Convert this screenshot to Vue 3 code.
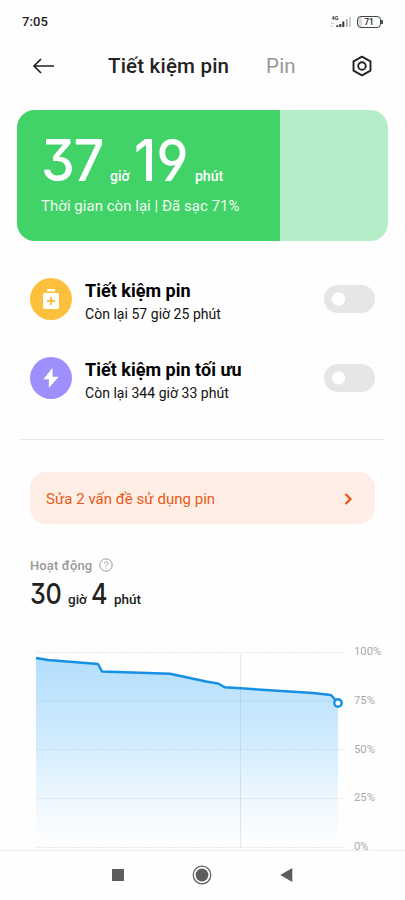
<script setup>
const modes = [
  { id: 'saver', title: 'Tiết kiệm pin', note: 'Còn lại 57 giờ 25 phút' },
  { id: 'ultra', title: 'Tiết kiệm pin tối ưu', note: 'Còn lại 344 giờ 33 phút' },
]
const levels = ['100%', '75%', '50%', '25%', '0%']
const gridLines = [12.5, 61, 109.5, 158.5, 207.5]
const curve = 'M36 18 L48 20 L98 24 L102 31.5 L170 33.8 L206 41.5 L218 43.5 L225 47.3 L313 53 L331 55 L338 63'
</script>

<template>
  <main class="screen">
    <div class="status">
      <span class="clock">7:05</span>
      <svg class="signal" width="22" height="14" viewBox="0 0 22 14">
        <text x="1.5" y="5" class="net">4G</text>
        <path d="M1 8.5h3M0 11h3" stroke="#ccc" stroke-width="1" />
        <path d="M7.3 12v-1.8M10.3 12V9M13.3 12V6.5" stroke="#333" stroke-width="2" />
        <path d="M16.8 12V4" stroke="#aaa" stroke-width="1.8" />
        <path d="M20 12V1.5" stroke="#ccc" stroke-width="1.8" />
      </svg>
      <span class="battery">71</span>
    </div>

    <header class="bar">
      <svg class="back" width="24" height="18" viewBox="0 0 24 18" fill="none" stroke="#222" stroke-width="1.7">
        <path d="M9 2 2 9l7 7M2 9h20" />
      </svg>
      <h1 class="tab active">Tiết kiệm pin</h1>
      <span class="tab">Pin</span>
      <svg class="gear" width="22" height="22" viewBox="0 0 22 22" fill="none" stroke="#222" stroke-width="1.9" stroke-linejoin="round">
        <path d="M11 1.7 19.5 6.3v9.4L11 20.3 2.5 15.7V6.3Z" />
        <circle cx="11" cy="11" r="3.8" />
      </svg>
    </header>

    <section class="charge">
      <div class="fill">
        <div class="time">
          <span class="num n1">37</span><span class="unit u1">giờ</span><span class="num n2">19</span><span class="unit">phút</span>
        </div>
        <p class="caption">Thời gian còn lại | Đã sạc 71%</p>
      </div>
    </section>

    <section class="modes">
      <div v-for="m in modes" :key="m.id" class="mode">
        <span class="disc" :class="m.id">
          <svg v-if="m.id === 'saver'" width="18" height="20" viewBox="0 0 18 20">
            <path d="M5 0h8v2.4H5Z" fill="#fff" />
            <rect x="1" y="4" width="16" height="16" rx="1.8" fill="#fff" />
            <path d="M9 8v8M5 12h8" stroke="#fbbd3b" stroke-width="1.8" />
          </svg>
          <svg v-else width="16" height="20" viewBox="0 0 16 20">
            <path d="M9.5 0 .3 11.3h5.5V20L15.7 8.7H9.5Z" fill="#fff" />
          </svg>
        </span>
        <div class="labels">
          <h2>{{ m.title }}</h2>
          <p>{{ m.note }}</p>
        </div>
        <span class="switch"></span>
      </div>
    </section>

    <hr class="rule" />

    <div class="alert">
      <span>Sửa 2 vấn đề sử dụng pin</span>
      <svg width="9" height="12" viewBox="0 0 9 12" fill="none" stroke="#ed5414" stroke-width="2.2">
        <path d="m1.5 1 5 5-5 5" />
      </svg>
    </div>

    <section class="activity">
      <div class="heading">
        <span>Hoạt động</span>
        <svg width="14" height="14" viewBox="0 0 14 14" fill="none" stroke="#999" stroke-width="1">
          <circle cx="7" cy="7" r="6.2" />
          <path d="M5.2 5.7C5.2 3 8.9 3.1 8.9 5.4 8.9 6.8 7 6.7 7 8.4M7 9.5v1.1" />
        </svg>
      </div>
      <div class="used">
        <span class="num s1">30</span><span class="unit">giờ</span><span class="num s2">4</span><span class="unit">phút</span>
      </div>
    </section>

    <section class="chart">
      <svg width="345" height="211" viewBox="0 0 345 211">
        <defs>
          <linearGradient id="area" x1="0" y1="18" x2="0" y2="204" gradientUnits="userSpaceOnUse">
            <stop offset="0" stop-color="#b3defd" />
            <stop offset=".42" stop-color="#cfebfe" />
            <stop offset=".75" stop-color="#edf7ff" />
            <stop offset="1" stop-color="#fefefe" />
          </linearGradient>
        </defs>
        <path :d="curve + ' V207 H36 Z'" fill="url(#area)" />
        <path v-for="y in gridLines" :key="y" :d="`M36 ${y}H343`" stroke="#8a9aa5" stroke-opacity=".22" stroke-dasharray="2 1" />
        <path d="M240.5 14V207" stroke="#8a9aa5" stroke-opacity=".22" />
        <path :d="curve" fill="none" stroke="#1790e3" stroke-width="2.5" stroke-linejoin="round" />
        <circle cx="338" cy="63" r="3.7" fill="#fff" stroke="#1790e3" stroke-width="2.4" />
      </svg>
      <div class="axis">
        <span v-for="l in levels" :key="l">{{ l }}</span>
      </div>
    </section>

    <nav class="nav">
      <svg width="12" height="12"><path d="M0 0h12v12H0Z" fill="#5d5d5d" /></svg>
      <svg width="20" height="20" viewBox="0 0 20 20">
        <circle cx="10" cy="10" r="8.8" fill="none" stroke="#5d5d5d" stroke-width="1.2" />
        <circle cx="10" cy="10" r="6.4" fill="#5d5d5d" />
      </svg>
      <svg width="13" height="14" viewBox="0 0 13 14"><path d="M12.3 0v14L.3 7Z" fill="#5d5d5d" /></svg>
    </nav>
  </main>
</template>

<style>
body { background: #fefefe; }
</style>

<style scoped>
.screen {
  width: 405px;
  height: 900px;
  overflow: hidden;
  display: flex;
  flex-direction: column;
  background: #fefefe;
  font-family: Roboto, "Noto Sans", sans-serif;
  color: #222;
}
h1, h2, p { margin: 0; font-weight: 400; }
svg { display: block; flex: none; }
span { white-space: nowrap; }
.status { display: flex; align-items: center; height: 43px; padding: 0 23px 0 22px; flex: none; }
.clock { font-size: 13px; font-weight: 500; letter-spacing: .1px; width: 308px; color: #222; }
.net { font: 700 5.5px Roboto, sans-serif; fill: #333; }
.battery {
  position: relative;
  width: 24px;
  height: 12px;
  margin-left: 5px;
  box-sizing: border-box;
  border: 1.5px solid #444;
  border-radius: 4px;
  background: linear-gradient(90deg, #ddd 20%, #fff 20%);
  font-size: 8.5px;
  font-weight: 500;
  line-height: 10px;
  text-align: center;
}
.battery::after { content: ""; position: absolute; left: 23px; top: 3px; width: 1.5px; height: 4px; background: #555; }
.bar { display: flex; align-items: center; height: 45px; padding-left: 32px; flex: none; }
.back { margin-right: 52px; }
.tab { font-size: 20.5px; line-height: 28px; color: #979797; letter-spacing: .2px; }
.tab.active { font-weight: 500; color: #222; width: 158px; padding-top: 1px; white-space: nowrap; }
.tab:not(.active) { width: 84.5px; padding-top: 1px; }
.charge { flex: none; width: 371px; height: 131px; margin: 22px 0 0 17px; border-radius: 18px; overflow: hidden; background: #b4edc7; }
.fill { width: 263px; height: 131px; background: #41d268; color: #fff; box-sizing: border-box; padding: 20px 0 0 24px; }
.time { display: flex; align-items: baseline; height: 66px; }
.num { font-family: Inter, Lato, sans-serif; font-feature-settings: "cv09", "cv04"; transform: scaleX(.87); transform-origin: 0 50%; }
.time .num { font-size: 58px; line-height: 61px; font-weight: 500; letter-spacing: -1.5px; transform: scaleX(.93); }
.time .unit { font-size: 14px; font-weight: 500; }
.n1 { width: 69px; }
.u1 { width: 24px; }
.time .n2 { width: 61px; letter-spacing: 0; }
.caption { font-size: 15px; line-height: 21px; letter-spacing: .03px; opacity: .92; white-space: nowrap; }
.modes { flex: none; padding: 18px 30px 0; }
.mode { display: flex; align-items: center; height: 79px; }
.disc { display: flex; align-items: center; justify-content: center; width: 42px; height: 42px; border-radius: 50%; }
.saver { background: #fdc03d; }
.ultra { background: #9e90fc; }
.labels { flex: 1; margin-left: 13px; padding-top: 7px; }
.labels h2 { font-size: 18px; line-height: 24px; font-weight: 700; color: #000; letter-spacing: .02px; }
.labels p { font-size: 14px; line-height: 23px; color: #111; letter-spacing: .03px; }
.switch { width: 51px; height: 28px; border-radius: 14px; background: radial-gradient(circle at 14.5px 14px, #fff 6.2px, #e6e6e6 6.9px); }
.rule { flex: none; width: 365px; height: 1px; margin: 22px 0 0 20px; border: 0; background: #e8e8e8; }
.alert { flex: none; display: flex; align-items: center; justify-content: space-between; box-sizing: border-box; width: 345px; height: 52px; margin: 32px 0 0 30px; padding: 1px 22px 0 16px; border-radius: 16px; background: #ffeee6; color: #e85a18; font-size: 15px; letter-spacing: .03px; }
.activity { flex: none; margin: 31px 0 0 30px; }
.heading { display: flex; align-items: center; gap: 7px; height: 20px; font-size: 13px; font-weight: 500; letter-spacing: .12px; color: #999; }
.used { display: flex; align-items: baseline; height: 65px; }
.used .num { font-size: 29px; line-height: 37px; font-weight: 500; letter-spacing: -.3px; }
.used .unit { font-size: 13.5px; font-weight: 500; }
.s1 { width: 38px; }
.used .s2 { width: 23px; margin-left: 4px; }
.chart { flex: none; display: flex; height: 210px; }
.axis { display: flex; flex-direction: column; margin-left: 9px; color: #aaa; font-size: 11.3px; }
.axis span { flex: none; height: 48.75px; line-height: 23px; }
.axis span:last-child { height: 15px; }
.nav { flex: none; height: 49px; box-sizing: border-box; border-top: 1px solid #eee; display: flex; align-items: center; padding-left: 112px; gap: 68px; }
</style>
